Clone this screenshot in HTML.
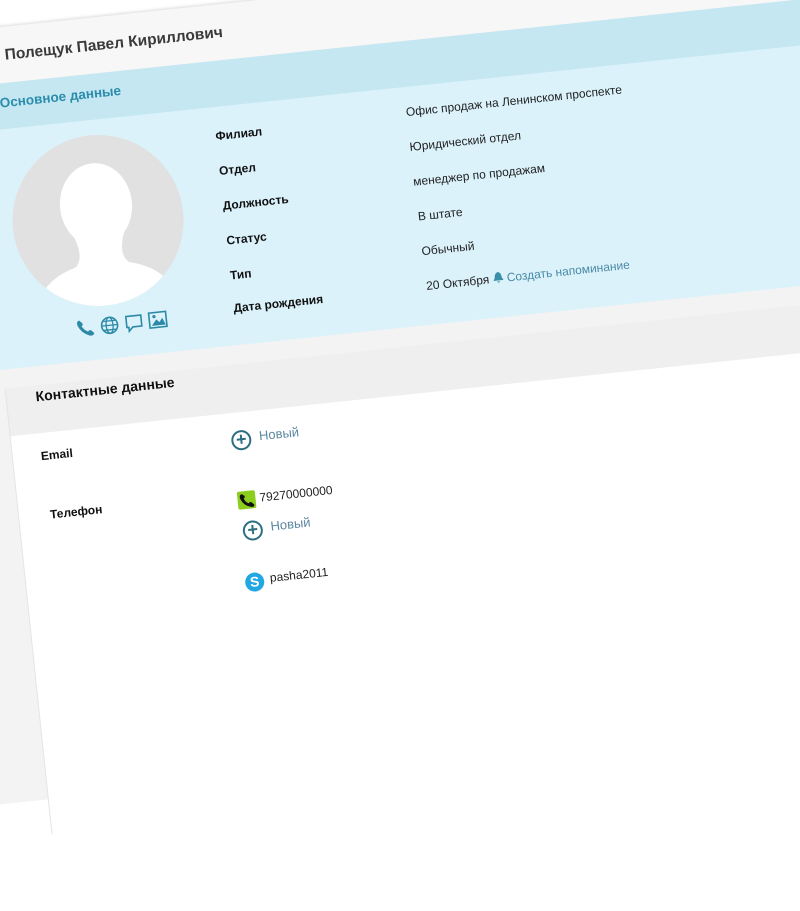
<!DOCTYPE html>
<html><head><meta charset="utf-8"><style>
html,body{margin:0;padding:0;width:800px;height:600px;overflow:hidden;background:#fff;font-family:"Liberation Sans","DejaVu Sans",sans-serif;}
#w{position:absolute;left:0;top:0;width:1000px;height:900px;transform:rotate(-6deg);transform-origin:0 0;white-space:nowrap;}
#w div{position:absolute;}
.lbl{font-size:12px;font-weight:bold;color:#111;}
.val{font-size:12px;color:#222;}
</style></head><body>
<div id="w">
  <div style="left:-150px;top:-100px;width:1100px;height:900px;background:#f3f3f3"></div>
  <div style="left:-150px;top:-100px;width:1100px;height:128px;background:#fff"></div>
  <div style="left:-150px;top:27px;width:1100px;height:56px;background:#f7f7f7;box-shadow:0 -1px 3px rgba(0,0,0,.15)"></div>
  <div style="left:-1px;top:47px;font-size:15.5px;font-weight:bold;color:#3a3a3a;">Полещук Павел Кириллович</div>
  <div style="left:-150px;top:83px;width:1100px;height:46px;background:#c4e7f2"></div>
  <div style="left:-11px;top:95px;font-size:13.5px;font-weight:bold;color:#2b8cac;">Основное данные</div>
  <div style="left:-150px;top:129px;width:1100px;height:239px;background:#dbf2fb"></div>
  <div style="left:-11px;top:144px;width:171px;height:171px;border-radius:50%;background:#e1e1e1;overflow:hidden">
    <svg width="171" height="171" viewBox="0 0 171 171" style="position:absolute;left:0;top:0">
      <ellipse cx="85" cy="70" rx="36" ry="42" fill="#fff"/>
      <path d="M60 100 Q68 122 58 130 Q28 138 18 160 L18 171 L153 171 L153 160 Q143 138 112 130 Q102 122 110 100 Z" fill="#fff"/>
    </svg>
  </div>
  <div style="left:40px;top:324px;width:110px;height:22px">
    <svg width="110" height="22" viewBox="0 0 110 22">
      <path d="M5 3 Q2 4 3 8 Q6 16 14 19 Q18 20 19 17 L16 14 Q14 13 13 15 Q9 13 7 9 Q9 8 8 6 Z" fill="#2c8aa6"/>
      <circle cx="35" cy="11" r="8" fill="none" stroke="#2c8aa6" stroke-width="1.6"/>
      <ellipse cx="35" cy="11" rx="3.5" ry="8" fill="none" stroke="#2c8aa6" stroke-width="1.3"/>
      <path d="M27 11H43M29 6.5H41M29 15.5H41" stroke="#2c8aa6" stroke-width="1.3"/>
      <path d="M52 4H67V15H58L54 19V15H52Z" fill="none" stroke="#2c8aa6" stroke-width="1.6"/>
      <rect x="75" y="3" width="17" height="15" fill="none" stroke="#2c8aa6" stroke-width="1.6"/>
      <path d="M77 16L82 10L85 13L88 9L91 16Z" fill="#2c8aa6"/><circle cx="80" cy="7" r="1.6" fill="#2c8aa6"/>
    </svg>
  </div>
  <div class="lbl" style="left:200px;top:151px">Филиал</div>
  <div class="lbl" style="left:200px;top:186px">Отдел</div>
  <div class="lbl" style="left:200px;top:221px">Должность</div>
  <div class="lbl" style="left:200px;top:256px">Статус</div>
  <div class="lbl" style="left:200px;top:291px">Тип</div>
  <div class="lbl" style="left:200px;top:324px">Дата рождения</div>
  <div class="val" style="left:392px;top:147px">Офис продаж на Ленинском проспекте</div>
  <div class="val" style="left:392px;top:182px">Юридический отдел</div>
  <div class="val" style="left:392px;top:217px">менеджер по продажам</div>
  <div class="val" style="left:393px;top:252px">В штате</div>
  <div class="val" style="left:393px;top:287px">Обычный</div>
  <div class="val" style="left:394px;top:322px">20 Октября <svg width="11" height="12" viewBox="0 0 11 12" style="vertical-align:-1px"><path d="M5.5 0.5 Q2 1.5 2 6 L0.5 9 H10.5 L9 6 Q9 1.5 5.5 0.5Z M4 10 H7 Q5.5 12.5 4 10Z" fill="#3b8fa8"/></svg> <span style="color:#4a8aa4">Создать напоминание</span></div>
  <div style="left:-36px;top:387px;width:1000px;height:48px;background:#efefef;border-left:1px solid #e4e4e4"></div>
  <div style="left:-36px;top:435px;width:1000px;height:400px;background:#fff;border-left:1px solid #e4e4e4"></div>
  <div style="left:-6px;top:390px;font-size:14px;font-weight:bold;color:#111">Контактные данные</div>
  <div class="lbl" style="left:-7px;top:451px">Email</div>
  <div style="left:184px;top:453px;width:20px;height:20px;border:2px solid #2c6f80;border-radius:50%;box-sizing:border-box;color:#2c6f80;font-size:18px;line-height:15px;text-align:center;font-weight:bold">+</div>
  <div style="left:212px;top:453px;font-size:13px;color:#5b87a0">Новый</div>
  <div class="lbl" style="left:-4px;top:510px">Телефон</div>
  <div style="left:184px;top:514px;width:18px;height:18px;background:#8ccd1e;border-radius:2px">
    <svg width="18" height="18" viewBox="0 0 20 20"><path d="M5 3 Q2 4 3 8 Q6 16 14 18 Q18 19 18 16 L15 13 Q13 12 12 14 Q8 12 7 8 Q9 7 8 5 Z" fill="#111"/></svg>
  </div>
  <div class="val" style="left:206px;top:515px">79270000000</div>
  <div style="left:186px;top:544px;width:20px;height:20px;border:2px solid #2c6f80;border-radius:50%;box-sizing:border-box;color:#2c6f80;font-size:18px;line-height:15px;text-align:center;font-weight:bold">+</div>
  <div style="left:214px;top:544px;font-size:13px;color:#5b87a0">Новый</div>
  <div style="left:183px;top:596px;width:19px;height:19px;background:#21a7e2;border-radius:50%;color:#fff;font-size:14px;font-weight:bold;text-align:center;line-height:19px">S</div>
  <div class="val" style="left:208px;top:596px">pasha2011</div>
</div>
</body></html>
